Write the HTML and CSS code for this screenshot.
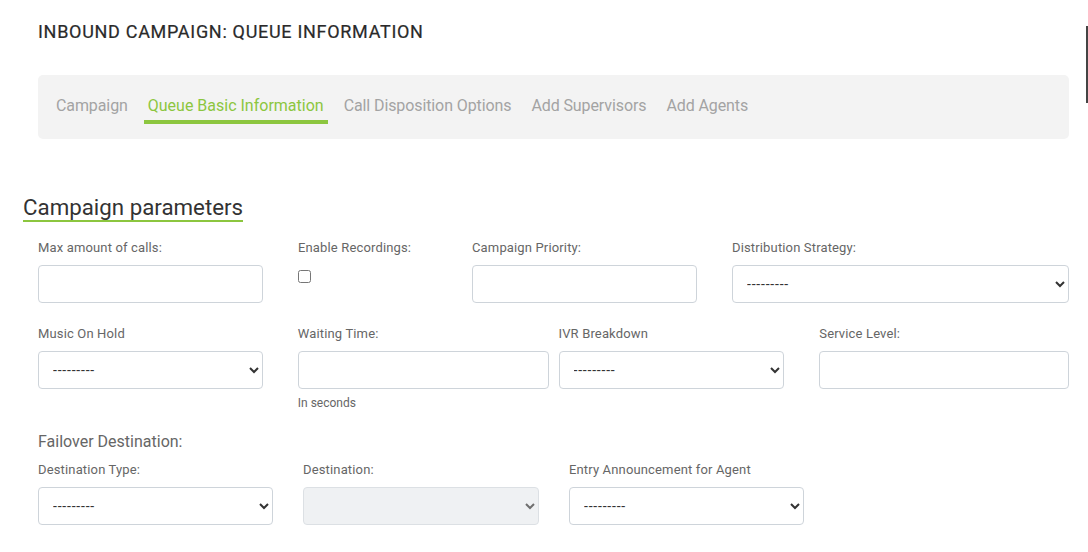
FILE: index.html
```html
<!DOCTYPE html>
<html lang="en">
<head>
<meta charset="utf-8">
<title>Inbound Campaign: Queue Information</title>
<link rel="stylesheet" href="styles.css">
</head>
<body>
<div class="edge-line"></div>
<main class="page">
  <h1 class="title">INBOUND CAMPAIGN: QUEUE INFORMATION</h1>
  <nav class="tabs">
    <a class="tab">Campaign</a>
    <a class="tab active">Queue Basic Information</a>
    <a class="tab">Call Disposition Options</a>
    <a class="tab">Add Supervisors</a>
    <a class="tab">Add Agents</a>
  </nav>

  <h2 class="section-title">Campaign parameters</h2>

  <div class="row row1">
    <div class="field w225">
      <label class="lbl">Max amount of calls:</label>
      <input class="ctl" type="text">
    </div>
    <div class="field w139 ml35">
      <label class="lbl">Enable Recordings:</label>
      <input class="chk" type="checkbox">
    </div>
    <div class="field w225 ml35">
      <label class="lbl">Campaign Priority:</label>
      <input class="ctl" type="text">
    </div>
    <div class="field w337 ml35">
      <label class="lbl">Distribution Strategy:</label>
      <select class="ctl sel"><option>---------</option></select>
    </div>
  </div>

  <div class="row row2">
    <div class="field w225">
      <label class="lbl">Music On Hold</label>
      <select class="ctl sel"><option>---------</option></select>
    </div>
    <div class="field w251 ml35">
      <label class="lbl">Waiting Time:</label>
      <input class="ctl" type="text">
      <small class="help">In seconds</small>
    </div>
    <div class="field w226 ml10">
      <label class="lbl">IVR Breakdown</label>
      <select class="ctl sel"><option>---------</option></select>
    </div>
    <div class="field w250 ml35">
      <label class="lbl">Service Level:</label>
      <input class="ctl" type="text">
    </div>
  </div>

  <h3 class="subhead">Failover Destination:</h3>

  <div class="row row3">
    <div class="field w235">
      <label class="lbl">Destination Type:</label>
      <select class="ctl sel"><option>---------</option></select>
    </div>
    <div class="field w236 ml30">
      <label class="lbl">Destination:</label>
      <select class="ctl sel" disabled><option></option></select>
    </div>
    <div class="field w235 ml30">
      <label class="lbl">Entry Announcement for Agent</label>
      <select class="ctl sel"><option>---------</option></select>
    </div>
  </div>
</main>
</body>
</html>
```
FILE: styles.css
```css
* { box-sizing: border-box; }
html, body { margin: 0; padding: 0; background: #fff; }
body {
  font-family: "Roboto", "Open Sans", sans-serif;
  color: #333;
  position: relative;
  width: 1088px;
  height: 552px;
  overflow: hidden;
}
.edge-line {
  position: absolute;
  left: 1086px;
  top: 26px;
  width: 2px;
  height: 77px;
  background: #444;
}
.page {
  width: 1031px;
  margin-left: 38px;
  padding-top: 21px;
}
.title {
  margin: 0;
  font-size: 18px;
  line-height: 22px;
  font-weight: 400;
  color: #2a2a2a;
  letter-spacing: 0.7px;
  -webkit-text-stroke: 0.2px #2a2a2a;
}
.tabs {
  margin-top: 32px;
  height: 64px;
  background: #f3f3f3;
  border-radius: 5px;
  display: flex;
  align-items: flex-start;
  padding: 12px 14px 0;
  gap: 12px;
}
.tab {
  font-size: 16px;
  line-height: 20px;
  color: #a3a3a3;
  padding: 9px 4px 4px;
  border-bottom: 4px solid transparent;
  text-decoration: none;
  letter-spacing: -0.1px;
}
.tab.active {
  color: #8cc63f;
  border-bottom-color: #8cc63f;
  letter-spacing: 0;
}
.section-title {
  display: inline-block;
  margin: 55px 0 0 -15px;
  font-size: 22.3px;
  line-height: 26px;
  font-weight: 400;
  color: #333;
  border-bottom: 2px solid #8cc63f;
}
.row { display: flex; align-items: flex-start; }
.row1 { margin-top: 18px; }
.row2 { margin-top: 23px; }
.row3 { margin-top: 10px; }
.field { display: flex; flex-direction: column; }
.w139 { width: 139px; }
.w225 { width: 225px; }
.w226 { width: 226px; }
.w235 { width: 235px; }
.w236 { width: 236px; }
.w250 { width: 250px; }
.w251 { width: 251px; }
.w337 { width: 337px; }
.ml10 { margin-left: 10px; }
.ml30 { margin-left: 30px; }
.ml35 { margin-left: 35px; }
.lbl {
  font-size: 13px;
  line-height: 16px;
  color: #666;
  margin-bottom: 9px;
  letter-spacing: 0.15px;
}
.ctl {
  width: 100%;
  height: 38px;
  border: 1px solid #ced4da;
  border-radius: 4px;
  background: #fff;
  font-family: inherit;
  font-size: 14px;
  color: #333;
  padding: 0 12px;
  margin: 0;
}
.sel { padding-left: 10px; letter-spacing: 0.8px; }
.sel:disabled { background: #e9ecef; }
.chk {
  width: 13px;
  height: 13px;
  margin: 5px 0 0 0;
}
.help {
  margin-top: 7px;
  font-size: 12px;
  line-height: 14px;
  color: #666;
}
.subhead {
  margin: 22px 0 0;
  font-size: 16px;
  line-height: 20px;
  font-weight: 400;
  color: #666;
}
```
